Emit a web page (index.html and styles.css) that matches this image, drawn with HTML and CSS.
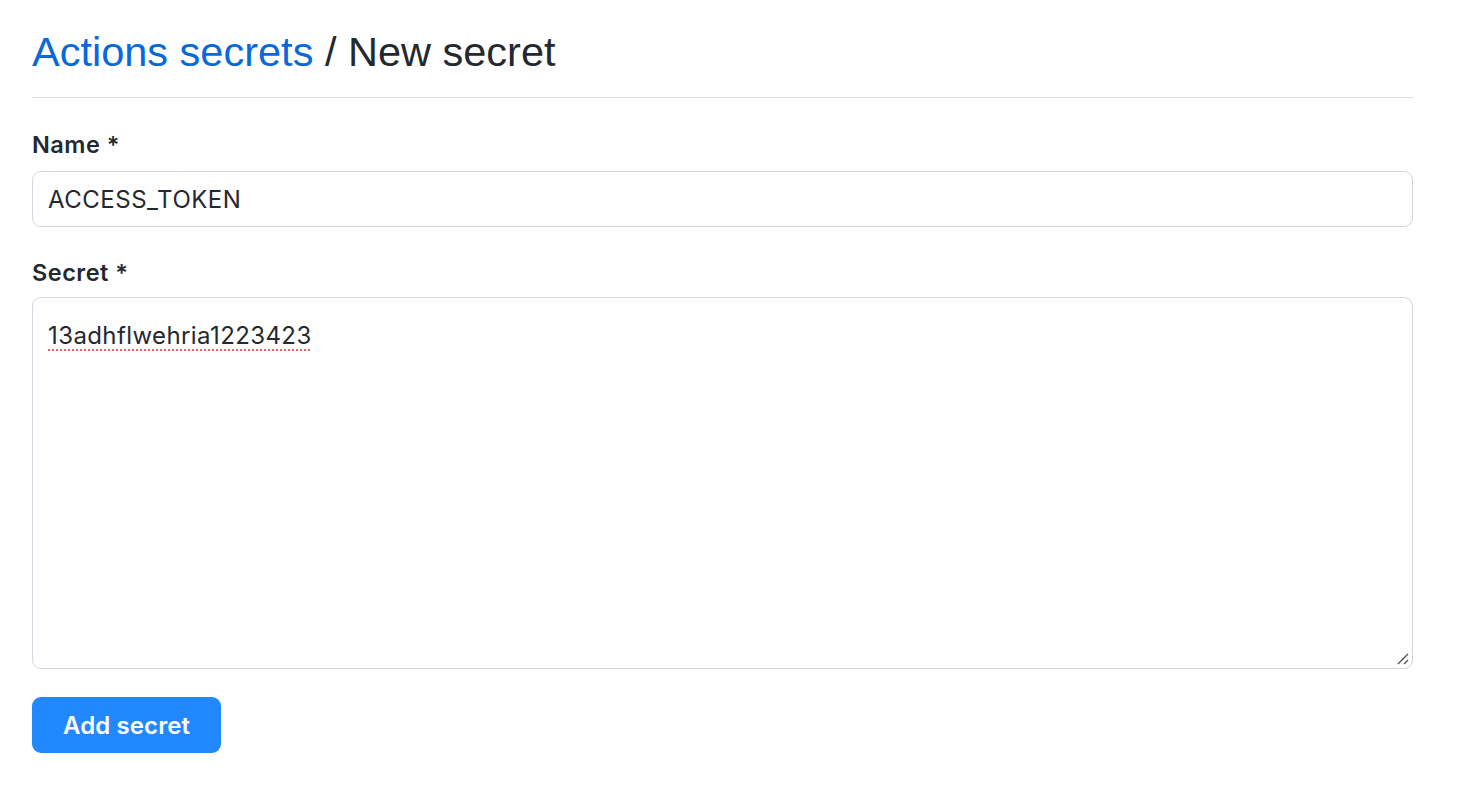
FILE: index.html
```html
<!DOCTYPE html>
<html>
<head>
<meta charset="utf-8">
<link rel="stylesheet" href="styles.css">
</head>
<body>
<div class="page">
  <h1 class="title"><a class="crumb" href="#">Actions secrets</a> / New secret</h1>
  <form class="form">
    <label class="label">Name *</label>
    <div class="input">ACCESS_TOKEN</div>
    <label class="label label-secret">Secret *</label>
    <div class="textarea">
      <span class="misspelt">13adhflwehria1223423</span>
      <svg class="grip" width="12" height="12" viewBox="0 0 12 12">
        <line x1="1" y1="11" x2="11" y2="1" stroke="#555" stroke-width="1.4"/>
        <line x1="7" y1="11" x2="11" y2="7" stroke="#555" stroke-width="1.4"/>
      </svg>
    </div>
    <button class="btn" type="button">Add secret</button>
  </form>
</div>
</body>
</html>
```
FILE: styles.css
```css
* { box-sizing: border-box; }
body {
  margin: 0;
  background: #fff;
  font-family: Inter, "Liberation Sans", Arial, sans-serif;
  color: #24292f;
}
.page {
  padding: 26px 55px 0 32px;
}
.title {
  margin: 0;
  font-family: "Liberation Sans", Arial, sans-serif;
  font-weight: 400;
  font-size: 41.5px;
  line-height: 52px;
  padding-bottom: 19px;
  border-bottom: 1px solid #d8dee4;
}
.crumb {
  color: #0969da;
  text-decoration: none;
}
.form {
  display: flex;
  flex-direction: column;
  align-items: flex-start;
  padding-top: 33px;
}
.label {
  font-weight: 600;
  font-size: 23.5px;
  line-height: 28px;
  margin-bottom: 12px;
  letter-spacing: 0.5px;
}
.label-secret {
  margin-bottom: 10px;
}
.input {
  width: 100%;
  height: 56px;
  border: 1px solid #d0d7de;
  border-radius: 9px;
  padding: 0 15px;
  font-size: 24px;
  letter-spacing: 0.5px;
  display: flex;
  align-items: center;
  margin-bottom: 32px;
}
.textarea {
  position: relative;
  width: 100%;
  height: 372px;
  border: 1px solid #d0d7de;
  border-radius: 9px;
  padding: 24px 15px;
  font-size: 24px;
  letter-spacing: 0.4px;
  line-height: 28px;
  margin-bottom: 28px;
}
.misspelt {
  text-decoration: underline dotted #f0605a;
  text-decoration-thickness: 2px;
  text-underline-offset: 5px;
}
.grip {
  position: absolute;
  right: 3px;
  bottom: 3px;
}
.btn {
  height: 56px;
  padding: 0 31px;
  border: none;
  border-radius: 9px;
  background: #2188ff;
  color: #fff;
  font-family: Inter, "Liberation Sans", Arial, sans-serif;
  font-weight: 600;
  font-size: 24px;
  letter-spacing: 0.1px;
}
```
